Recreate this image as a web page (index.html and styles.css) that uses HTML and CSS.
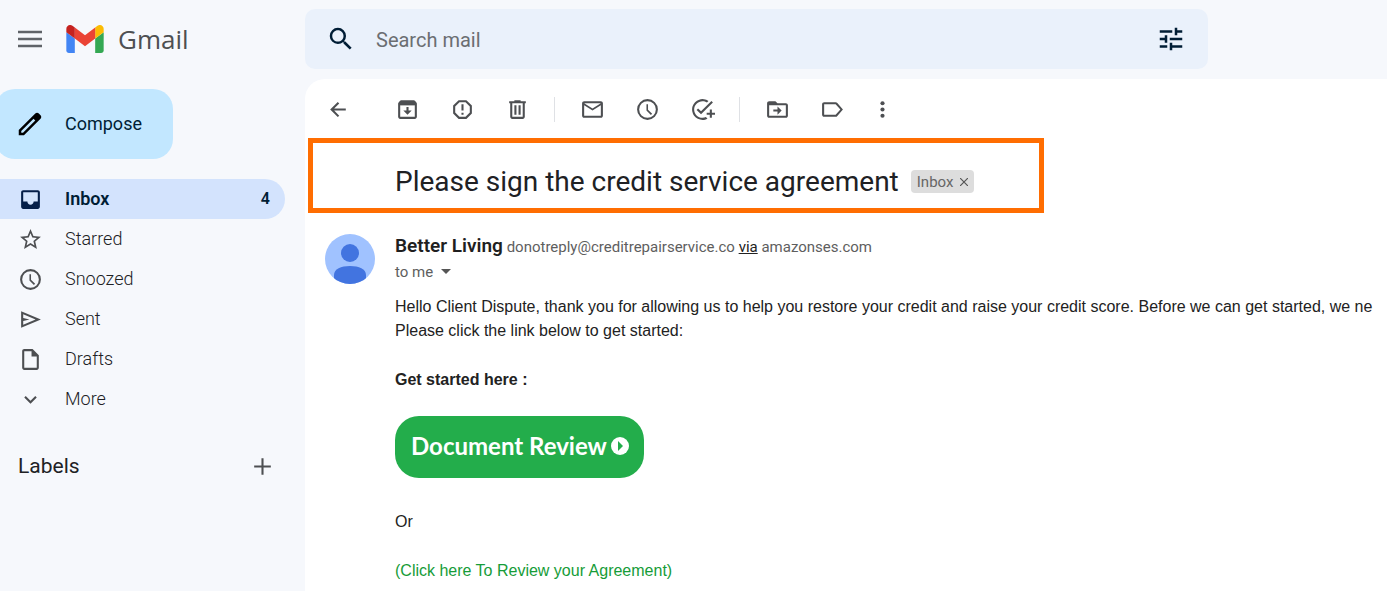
FILE: index.html
```html
<!DOCTYPE html>
<html lang="en">
<head>
    <meta charset="UTF-8">
    <title>Gmail</title>
    <link rel="stylesheet" href="styles.css">
</head>
<body>
    <header class="header">
        <div class="brand">
            <button class="icon-btn" aria-label="Main menu">
                <svg class="menu-icon" viewBox="0 0 24 18"><path d="M0 2h24M0 9h24M0 16h24" fill="none" stroke="#5f6368" stroke-width="2.400"/></svg>
            </button>
            <a class="logo" href="#">
                <svg class="logo-mark" viewBox="52 42 88 66">
                    <path fill="#4285f4" d="M58 108h14V74L52 59v43c0 3.32 2.69 6 6 6"/>
                    <path fill="#34a853" d="M120 108h14c3.32 0 6-2.69 6-6V59l-20 15"/>
                    <path fill="#fbbc04" d="M120 48v26l20-15v-8c0-7.42-8.47-11.65-14.4-7.2"/>
                    <path fill="#ea4335" d="M72 74V48l24 18 24-18v26L96 92"/>
                    <path fill="#c5221f" d="M52 51v8l20 15V48l-5.6-4.2c-5.94-4.45-14.4-.22-14.4 7.2"/>
                </svg>
                <span>Gmail</span>
            </a>
        </div>
        <form class="search">
            <button class="icon-btn" type="button" aria-label="Search">
                <svg class="big-icon" viewBox="0 0 24 24"><path d="M15.5 14h-.79l-.28-.27A6.47 6.47 0 0 0 16 9.5 6.5 6.5 0 1 0 9.5 16c1.61 0 3.09-.59 4.23-1.57l.27.28v.79l5 4.99L20.49 19l-4.99-5zm-6 0C7.01 14 5 11.99 5 9.5S7.01 5 9.5 5 14 7.01 14 9.5 11.99 14 9.5 14z"/></svg>
            </button>
            <input type="text" placeholder="Search mail" aria-label="Search mail">
            <button class="icon-btn" type="button" aria-label="Search options">
                <svg class="big-icon" viewBox="0 0 24 24"><path d="M3 17v2h6v-2H3zM3 5v2h10V5H3zm10 16v-2h8v-2h-8v-2h-2v6h2zM7 9v2H3v2h4v2h2V9H7zm14 4v-2H11v2h10zm-6-4h2V7h4V5h-4V3h-2v6z"/></svg>
            </button>
        </form>
    </header>

    <div class="layout">
        <aside class="sidebar">
            <button class="compose">
                <svg class="big-icon" viewBox="0 0 24 24"><path d="M20.41 4.94l-1.35-1.35c-.78-.78-2.05-.78-2.83 0L3 16.82V21h4.18L20.41 7.77c.79-.78.79-2.05 0-2.83zM6.41 19.06L5 19v-1.36l9.82-9.82 1.41 1.41-9.82 9.83z"/></svg>
                <span>Compose</span>
            </button>
            <nav class="folders">
                <a class="folder active" href="#">
                    <svg class="icon" viewBox="0 0 24 24"><path d="M19 3H5c-1.1 0-2 .9-2 2v14c0 1.100.9 2 2 2h14c1.100 0 2-.9 2-2V5c0-1.100-.9-2-2-2zm0 11h-4c0 1.660-1.350 3-3 3s-3-1.340-3-3H5V5h14v9z"/></svg>
                    <span>Inbox</span>
                    <span class="count">4</span>
                </a>
                <a class="folder" href="#">
                    <svg class="icon" viewBox="0 0 24 24"><path d="M22 9.240l-7.190-.62L12 2 9.190 8.630 2 9.240l5.460 4.730L5.820 21 12 17.270 18.180 21l-1.630-7.030L22 9.240zM12 15.400l-3.760 2.270 1-4.280-3.320-2.880 4.380-.38L12 6.100l1.710 4.040 4.380.38-3.320 2.880 1 4.280L12 15.400z"/></svg>
                    <span>Starred</span>
                </a>
                <a class="folder" href="#">
                    <svg class="icon" viewBox="0 0 24 24"><path d="M12 2a10 10 0 1 0 0 20 10 10 0 0 0 0-20zm0 18a8 8 0 1 1 0-16 8 8 0 0 1 0 16zM12.500 7H11v6l4.250 4.250 1.200-1.200-3.950-3.900V7z"/></svg>
                    <span>Snoozed</span>
                </a>
                <a class="folder" href="#">
                    <svg class="icon" viewBox="0 0 24 24"><path d="M3 4v16l19-8L3 4zm2 3l11.850 5L5 17v-3.500l6-1.500-6-1.500V7z"/></svg>
                    <span>Sent</span>
                </a>
                <a class="folder" href="#">
                    <svg class="icon" viewBox="0 0 24 24"><path d="M14 2H6c-1.100 0-2 .9-2 2v16c0 1.100.9 2 2 2h12c1.100 0 2-.9 2-2V8l-6-6zM6 20V4h7v5h5v11H6z"/></svg>
                    <span>Drafts</span>
                </a>
                <a class="folder" href="#">
                    <svg class="icon" viewBox="0 0 24 24"><path d="M7.410 8.590L12 13.170l4.590-4.580L18 10l-6 6-6-6z"/></svg>
                    <span>More</span>
                </a>
            </nav>
            <div class="labels">
                <h2>Labels</h2>
                <button class="icon-btn" aria-label="Create new label">
                    <svg class="icon" viewBox="0 0 24 24"><path d="M20 13h-7v7h-2v-7H4v-2h7V4h2v7h7v2z"/></svg>
                </button>
            </div>
        </aside>

        <main class="mail">
            <div class="toolbar">
                <div class="tools back">
                    <button class="icon-btn" aria-label="Back"><svg class="icon" viewBox="0 0 24 24"><path d="M19 11H7.830l4.880-4.880L11.300 4.700 4 12l7.300 7.300 1.410-1.420L7.830 13H19z"/></svg></button>
                </div>
                <div class="tools">
                    <button class="icon-btn" aria-label="Archive"><svg class="icon" viewBox="0 0 24 24"><path fill-opacity=".5" d="M5 5h14v3H5z"/><path d="M20.540 5.230l-1.390-1.680C18.880 3.210 18.470 3 18 3H6c-.47 0-.88.21-1.160.55L3.460 5.230C3.170 5.570 3 6.020 3 6.500V19c0 1.100.9 2 2 2h14c1.100 0 2-.9 2-2V6.500c0-.48-.17-.93-.46-1.270zM19 19H5V8h14v11zM13 9.500V13h3l-4 4-4-4h3V9.500z"/></svg></button>
                    <button class="icon-btn" aria-label="Report spam"><svg class="icon" viewBox="0 0 24 24"><path d="M15.730 3H8.270L3 8.270v7.460L8.270 21h7.460L21 15.730V8.270L15.730 3zM19 14.900L14.900 19H9.100L5 14.900V9.100L9.100 5h5.800L19 9.100v5.800zM11 7h2v6h-2zM11 15h2v2h-2z"/></svg></button>
                    <button class="icon-btn" aria-label="Delete"><svg class="icon" viewBox="0 0 24 24"><path d="M15 4V3H9v1H4v2h1v13c0 1.100.9 2 2 2h10c1.100 0 2-.9 2-2V6h1V4h-5zm2 15H7V6h10v13zM9 8h2v9H9zM13 8h2v9h-2z"/></svg></button>
                </div>
                <div class="divider"></div>
                <div class="tools">
                    <button class="icon-btn" aria-label="Mark as unread"><svg class="icon" viewBox="0 0 24 24"><path d="M20 4H4c-1.100 0-2 .9-2 2v12c0 1.100.9 2 2 2h16c1.100 0 2-.9 2-2V6c0-1.100-.9-2-2-2zm0 14H4V8l8 5 8-5v10zm-8-7L4 6h16l-8 5z"/></svg></button>
                    <button class="icon-btn" aria-label="Snooze"><svg class="icon" viewBox="0 0 24 24"><path d="M12 2a10 10 0 1 0 0 20 10 10 0 0 0 0-20zm0 18a8 8 0 1 1 0-16 8 8 0 0 1 0 16zM12.500 7H11v6l4.250 4.250 1.200-1.200-3.950-3.900V7z"/></svg></button>
                    <button class="icon-btn" aria-label="Add to tasks"><svg class="icon" viewBox="0 0 24 24"><path d="M22 5.180L10.590 16.600l-4.240-4.240 1.410-1.410 2.830 2.830 10-10L22 5.180zM12 20c-4.410 0-8-3.590-8-8s3.590-8 8-8c1.570 0 3.040.46 4.280 1.250l1.450-1.450A10 10 0 1 0 12 22c1.730 0 3.360-.44 4.780-1.220l-1.500-1.500c-1 .46-2.110.72-3.280.72zm7-5h-3v2h3v3h2v-3h3v-2h-3v-3h-2v3z"/></svg></button>
                </div>
                <div class="divider"></div>
                <div class="tools">
                    <button class="icon-btn" aria-label="Move to"><svg class="icon" viewBox="0 0 24 24"><path d="M20 6h-8l-2-2H4c-1.100 0-2 .9-2 2v12c0 1.100.9 2 2 2h16c1.100 0 2-.9 2-2V8c0-1.100-.9-2-2-2zm0 12H4V8h16v10zm-8-1l4-4-4-4v3H8v2h4z"/></svg></button>
                    <button class="icon-btn" aria-label="Labels"><svg class="icon" viewBox="0 0 24 24"><path d="M16.630 5.840C16.270 5.330 15.670 5 15 5H4c-1.100 0-2 .9-2 2v10c0 1.100.9 2 2 2h11c.67 0 1.270-.33 1.630-.84L22 12l-5.370-6.160zM15 17H4V7h11l4.550 5L15 17z"/></svg></button>
                    <button class="icon-btn" aria-label="More"><svg class="dots-icon" viewBox="0 0 14 24"><circle cx="7" cy="6" r="2"/><circle cx="7" cy="12" r="2"/><circle cx="7" cy="18" r="2"/></svg></button>
                </div>
            </div>

            <div class="subject">
                <h1>Please sign the credit service agreement</h1>
                <span class="tag">Inbox <button aria-label="Remove label Inbox"><svg viewBox="0 0 8 8"><path d="M0 0l8 8M8 0L0 8" stroke="#555" stroke-width="1.200"/></svg></button></span>
            </div>

            <article class="message">
                <svg class="avatar" viewBox="0 0 50 50">
                    <clipPath id="round"><circle cx="25" cy="25" r="25"/></clipPath>
                    <g clip-path="url(#round)">
                        <path fill="#a0c2ff" d="M0 0h50v50H0z"/>
                        <circle cx="25" cy="19" r="9" fill="#4274e0"/>
                        <path fill="#4274e0" d="M9 50V41C9 35 16 32 25 32s16 3 16 9v9z"/>
                    </g>
                </svg>
                <div class="content">
                    <div class="sender"><strong>Better Living</strong> donotreply@creditrepairservice.co <a href="#">via</a> amazonses.com</div>
                    <div class="recipient">to me <button aria-label="Show details"><svg viewBox="0 0 10 5"><path d="M0 0h10L5 5z" fill="#555"/></svg></button></div>
                    <div class="body">
                        <p>Hello Client Dispute, thank you for allowing us to help you restore your credit and raise your credit score. Before we can get started, we ne<br>Please click the link below to get started:</p>
                        <p><b>Get started here :</b></p>
                        <a class="review-btn" href="#">Document Review
                            <svg viewBox="0 0 18 18"><circle cx="9" cy="9" r="9" fill="#fff"/><path d="M7 4l5 5-5 5z" fill="#23ad4b"/></svg>
                        </a>
                        <p>Or</p>
                        <p><a class="agreement" href="#">(Click here To Review your Agreement)</a></p>
                    </div>
                </div>
            </article>
        </main>
    </div>
</body>
</html>
```
FILE: styles.css
```css
* {
    box-sizing: border-box;
}
body {
    margin: 0;
    min-height: 100vh;
    display: flex;
    flex-direction: column;
    overflow: hidden;
    background: #f6f8fc;
    color: #202124;
    font-family: Roboto, "Liberation Sans", sans-serif;
}
button {
    padding: 0;
    border: none;
    background: none;
    font: inherit;
    color: inherit;
    cursor: pointer;
}
a {
    color: inherit;
    text-decoration: none;
}
h1, h2, p {
    margin: 0;
}
svg {
    display: block;
    flex: none;
}
.icon-btn {
    display: flex;
    align-items: center;
    justify-content: center;
}
.icon {
    width: 25px;
    height: 25px;
    fill: #4d4f52;
}
.big-icon {
    width: 30px;
    height: 30px;
    fill: #001d35;
}

/* header */
.header {
    display: grid;
    grid-template-columns: 305px 1fr;
    padding: 9px 179px 10px 0;
}
.brand {
    display: flex;
    align-items: center;
    gap: 24px;
    padding-left: 18px;
}
.menu-icon {
    width: 24px;
    height: 18px;
}
.logo {
    display: flex;
    align-items: center;
    gap: 14px;
    font-family: "Open Sans", sans-serif;
    font-size: 26px;
    font-weight: 500;
    color: #4d4f52;
}
.logo-mark {
    width: 38px;
    height: 28px;
}
.search {
    display: flex;
    align-items: center;
    height: 60px;
    padding: 0 22px 0 21px;
    gap: 20px;
    border-radius: 10px;
    background: #eaf1fb;
}
.search input {
    flex: 1;
    min-width: 0;
    padding: 2px 0 0;
    border: none;
    outline: none;
    background: none;
    font-family: inherit;
    font-size: 20px;
}
.search input::placeholder {
    color: #6b6e72;
}

.layout {
    flex: 1;
    display: grid;
    grid-template-columns: 305px minmax(0, 1fr);
}

/* sidebar */
.sidebar {
    padding-top: 10px;
}
.compose {
    display: flex;
    align-items: center;
    gap: 20px;
    height: 70px;
    margin: 0 0 20px -5px;
    padding: 0 31px 0 20px;
    border-radius: 20px;
    background: #c2e7ff;
    color: #001d35;
    font-size: 18px;
}
.compose .big-icon {
    fill: #000;
}
.compose span,
.folder span {
    padding-bottom: 2px;
}
.folder {
    display: flex;
    align-items: center;
    gap: 22px;
    height: 40px;
    margin-right: 20px;
    padding: 0 15px 0 18px;
    border-radius: 0 20px 20px 0;
    font-size: 18px;
    font-weight: 300;
}
.folder.active {
    background: #d3e3fd;
    color: #001d35;
    font-weight: 600;
}
.folder.active .icon {
    fill: #041e49;
}
.folder .count {
    margin-left: auto;
    font-size: 16px;
}
.labels {
    display: flex;
    align-items: center;
    justify-content: space-between;
    padding: 35px 30px 0 18px;
}
.labels h2 {
    padding-bottom: 1px;
    font-size: 21px;
    font-weight: 400;
    line-height: 24px;
}

/* open mail */
.mail {
    border-radius: 20px 0 0 0;
    background: #fff;
}
.toolbar {
    display: flex;
    align-items: center;
    padding: 18px 21px 16px;
}
.tools {
    display: flex;
    gap: 30px;
}
.back {
    margin-right: 44px;
}
.dots-icon {
    width: 15px;
    height: 25px;
    fill: #4d4f52;
}
.divider {
    width: 1px;
    height: 25px;
    margin: 0 25px 0 24px;
    background: #dfe1e5;
}
.subject {
    display: flex;
    align-items: center;
    gap: 12px;
    width: 68%;
    height: 75px;
    margin-left: 3px;
    padding: 12px 0 0 82px;
    border: 5px solid #ff6d01;
    white-space: nowrap;
}
.subject h1 {
    font-size: 28px;
    font-weight: 400;
}
.tag {
    display: flex;
    align-items: center;
    gap: 7px;
    height: 23px;
    padding: 0 6px;
    border-radius: 4px;
    background: #ddd;
    color: #666;
    font-size: 15px;
}
.tag svg {
    width: 8px;
    height: 8px;
}
.message {
    display: flex;
    gap: 20px;
    padding: 21px 0 0 20px;
}
.avatar {
    width: 50px;
    height: 50px;
}
.content {
    flex: 1;
    min-width: 0;
    white-space: nowrap;
}
.sender, .recipient {
    color: #5e5e5e;
    font-size: 15px;
}
.sender {
    height: 25px;
    line-height: 23px;
}
.sender strong {
    color: #1f1f1f;
    font-size: 19px;
    font-weight: 600;
}
.sender a {
    color: #222;
    text-decoration: underline;
}
.recipient {
    display: flex;
    align-items: center;
    gap: 8px;
    height: 25px;
}
.recipient svg {
    width: 10px;
    height: 5px;
}
.body {
    display: flex;
    flex-direction: column;
    align-items: flex-start;
    gap: 25px;
    padding-top: 11px;
    color: #222;
    font-family: "Liberation Sans", Arial, sans-serif;
    font-size: 16px;
    line-height: 24px;
}
.review-btn {
    display: flex;
    align-items: center;
    gap: 4px;
    height: 62px;
    margin: -1px 0 7px;
    padding: 0 15px 2px 16px;
    border-radius: 24px;
    background: #23ad4b;
    color: #fff;
    font-family: Lato, sans-serif;
    font-size: 24px;
    font-weight: 700;
}
.review-btn svg {
    width: 18px;
    height: 18px;
}
.agreement {
    color: #169c38;
}
```
